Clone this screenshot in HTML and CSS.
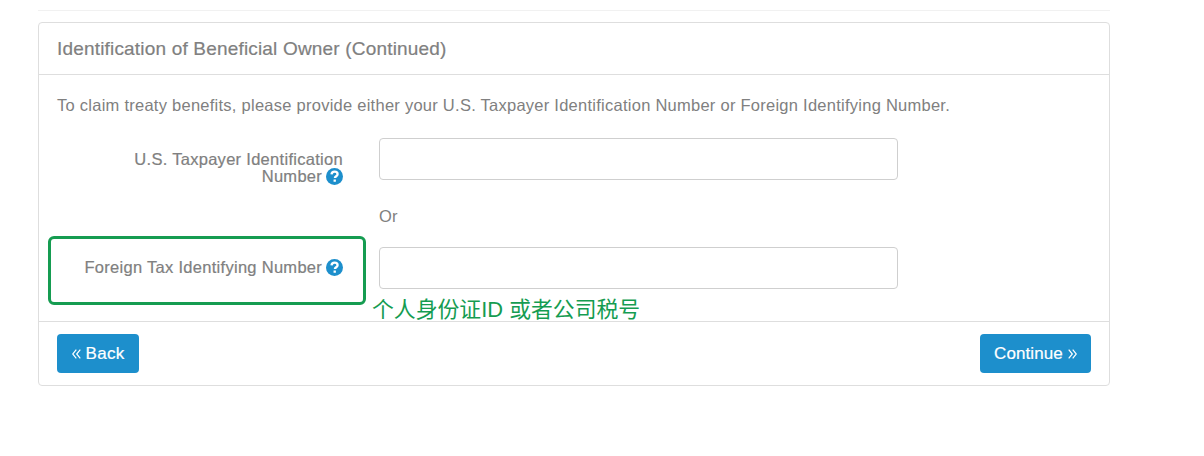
FILE: index.html
```html
<!DOCTYPE html>
<html lang="en">
<head>
<meta charset="utf-8">
<title>Identification of Beneficial Owner</title>
<link rel="stylesheet" href="styles.css">
</head>
<body>
<main class="page">
  <hr class="divider">
  <section class="panel">
    <header class="panel-header"><h1 class="title">Identification of Beneficial Owner (Continued)</h1></header>
    <div class="panel-body">
      <p class="intro">To claim treaty benefits, please provide either your U.S. Taxpayer Identification Number or Foreign Identifying Number.</p>
      <div class="row">
        <label class="label" for="us">U.S. Taxpayer Identification<br>Number <svg class="help" viewBox="0 0 16 16"><circle cx="8" cy="8" r="8"/><path d="M5.2 6C5.3 4.2 6.5 3.4 8.1 3.4c1.6 0 2.8.9 2.8 2.4 0 2-2.5 1.9-2.5 3.7M8.2 10.8v2.1"/></svg></label>
        <input class="field" id="us" type="text">
      </div>
      <p class="or">Or</p>
      <div class="row">
        <label class="label" for="foreign">Foreign Tax Identifying Number <svg class="help" viewBox="0 0 16 16"><circle cx="8" cy="8" r="8"/><path d="M5.2 6C5.3 4.2 6.5 3.4 8.1 3.4c1.6 0 2.8.9 2.8 2.4 0 2-2.5 1.9-2.5 3.7M8.2 10.8v2.1"/></svg></label>
        <input class="field" id="foreign" type="text">
      </div>
    </div>
    <footer class="panel-footer">
      <button class="button back"><svg class="chevrons" viewBox="0 0 9 10"><path d="M4.3.7.7 5l3.6 4.3M8.3.7 4.7 5l3.6 4.3"/></svg><span class="back-text">Back</span></button>
      <button class="button continue"><span class="continue-text">Continue</span><svg class="chevrons" viewBox="0 0 9 10"><path d="M.7.7 4.3 5 .7 9.3M4.7.7 8.3 5 4.7 9.3"/></svg></button>
    </footer>
    <div class="highlight"></div>
    <div class="note" lang="zh">个人身份证ID 或者公司税号</div>
  </section>
</main>
</body>
</html>
```
FILE: styles.css
```css
* { box-sizing: border-box; }
body { margin: 0; background: #fff; color: #808080; font: 16.5px/20px "Liberation Sans", Arial, sans-serif; }
.page { width: 1072px; margin-left: 38px; padding-top: 10px; }
.divider { height: 1px; margin: 0 0 11px; border: 0; background: #f1f1f1; }
.panel { position: relative; height: 364px; display: flex; flex-direction: column; border: 1px solid #dedede; border-radius: 4px; }
.panel-header { height: 52px; flex: none; padding: 15px 18px 0; border-bottom: 1px solid #dedede; }
.title { margin: 0; font-size: 19px; line-height: 22px; font-weight: 400; letter-spacing: .18px; white-space: nowrap; -webkit-text-stroke: .2px; }
.panel-body { flex: 1; padding: 20px 18px 0; }
.intro { margin: 0 0 23px; height: 20px; white-space: nowrap; letter-spacing: .255px; }
.row { display: flex; height: 42px; align-items: flex-start; }
.label { width: 286px; margin-right: 36px; padding-top: 13px; text-align: right; line-height: 16.5px; white-space: nowrap; letter-spacing: .29px; -webkit-text-stroke: .2px; }
.help { width: 17px; height: 17px; margin: -2px 0 -2px -1px; vertical-align: -1px; fill: #1d8fcc; }
.help path { fill: none; stroke: #fff; stroke-width: 2.2; }
.field { width: 519px; height: 42px; padding: 0 12px; border: 1px solid #cfcfcf; border-radius: 4px; background: #fff; font: inherit; }
.or { height: 20px; margin: 26px 0 21px 322px; letter-spacing: .2px; }
.row:last-child .label { padding-top: 12px; }
.panel-footer { height: 64px; flex: none; padding: 12px 18px; display: flex; justify-content: space-between; align-items: flex-start; border-top: 1px solid #dedede; }
.button { height: 39px; padding: 0; display: flex; align-items: center; justify-content: center; gap: 5px; border: 0; border-radius: 4px; background: #1d8fcc; color: #fff; font: inherit; font-size: 17px; -webkit-text-stroke: .2px; }
.back { width: 82px; }
.continue { width: 111px; }
.continue-text { letter-spacing: .1px; }
.back-text { letter-spacing: .3px; }
.chevrons { width: 9px; height: 10px; margin-top: 1px; fill: none; stroke: #fff; stroke-width: 1.2; }
.highlight { position: absolute; left: 9px; top: 213px; width: 318px; height: 69px; border: 3px solid #159c51; border-radius: 6px; }
.note { position: absolute; left: 333px; top: 273px; color: #159c51; white-space: nowrap; font: 400 21.85px/28px "Liberation Sans", "Noto Sans CJK SC", sans-serif; }
```
